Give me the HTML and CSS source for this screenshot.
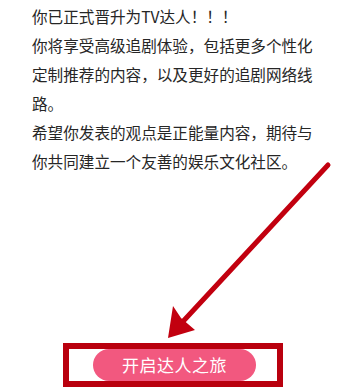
FILE: index.html
```html
<!DOCTYPE html>
<html lang="zh-CN">
<head>
<meta charset="utf-8">
<link rel="stylesheet" href="styles.css">
</head>
<body>
<div class="page">
  <div class="message">
    <p class="line">你已正式晋升为TV达人！！！</p>
    <p class="line">你将享受高级追剧体验，包括更多个性化定制推荐的内容，以及更好的追剧网络线路。</p>
    <p class="line">希望你发表的观点是正能量内容，期待与你共同建立一个友善的娱乐文化社区。</p>
  </div>
  <div class="highlight">
    <button class="start-btn">开启达人之旅</button>
  </div>
  <svg class="arrow" width="342" height="388" viewBox="0 0 342 388">
    <line x1="328" y1="165" x2="176" y2="329" stroke="#c2000f" stroke-width="5" stroke-linecap="round"/>
    <polygon points="168,338 173,306 181,318 195,330" fill="#c2000f"/>
  </svg>
</div>
</body>
</html>
```
FILE: styles.css
```css
html, body {
  margin: 0;
  padding: 0;
  background: #ffffff;
}
.page {
  position: relative;
  width: 342px;
  height: 388px;
  overflow: hidden;
  font-family: "Noto Sans CJK SC", "Noto Sans", sans-serif;
}
.message {
  padding: 2px 0 0 32px;
  width: 290px;
}
.line {
  margin: 0;
  font-size: 15.6px;
  line-height: 29px;
  color: #262626;
}
.highlight {
  margin: 167px 0 0 63px;
  width: 208px;
  height: 32px;
  border: 6px solid #b9000e;
  display: flex;
  justify-content: flex-start;
  padding-left: 24px;
  box-sizing: content-box;
  width: 184px;
}
.start-btn {
  width: 163px;
  height: 32px;
  border: none;
  border-radius: 16px;
  background: #f2587f;
  color: #ffffff;
  font-family: "Noto Sans CJK SC", "Noto Sans", sans-serif;
  font-size: 17px;
  line-height: 32px;
  padding: 0;
  letter-spacing: 0.5px;
}
.arrow {
  position: absolute;
  left: 0;
  top: 0;
  pointer-events: none;
}
```
